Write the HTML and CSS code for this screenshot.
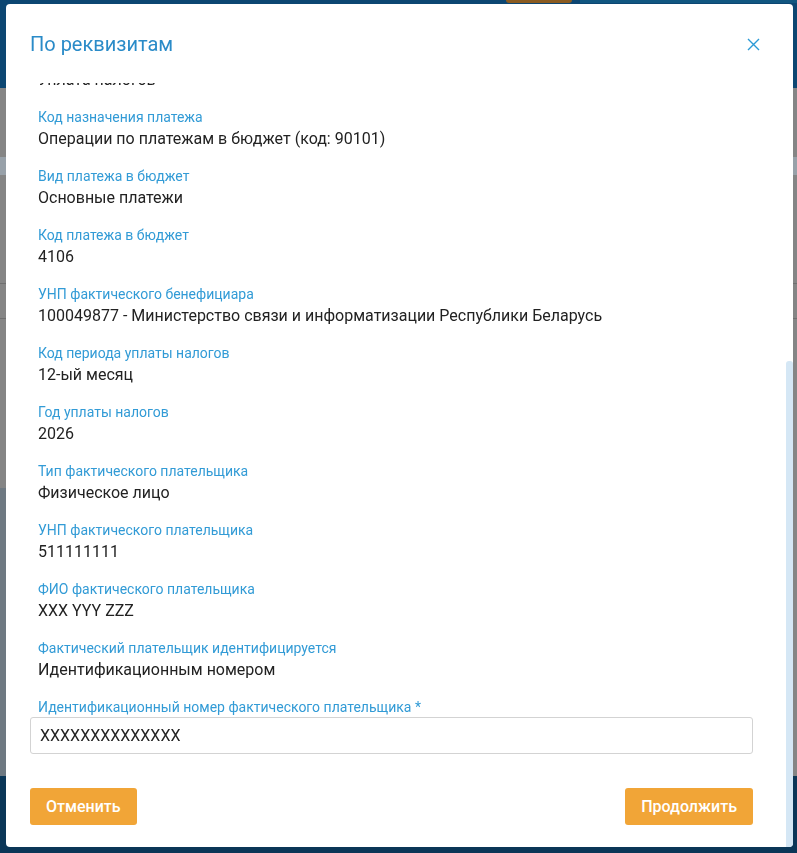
FILE: index.html
```html
<!DOCTYPE html>
<html lang="ru">

<head>
    <title>По реквизитам</title>
    <meta charset="utf-8">
    <link rel="stylesheet" href="styles.css">
</head>

<body>
    <div class="page">
        <header class="page-header">
            <div class="page-header-btn"></div>
            <div class="page-header-panel"></div>
        </header>
        <main class="page-main">
            <div class="page-row-head"></div>
            <div class="page-line page-line-first"></div>
            <div class="page-line page-line-second"></div>
            <div class="page-side"></div>
        </main>
        <footer class="page-footer"></footer>
    </div>

    <div class="modal">
        <div class="modal-header">
            <h2 class="modal-title">По реквизитам</h2>
            <button class="modal-close" aria-label="Закрыть">
                <svg width="13" height="13" viewBox="0 0 13 13">
                    <path d="M1 1 L12 12 M12 1 L1 12" stroke="currentColor" stroke-width="1.4" fill="none"/>
                </svg>
            </button>
        </div>

        <div class="modal-body">
            <dl class="details">
                <!-- first row is scrolled up under the header -->
                <div class="detail">
                    <dd class="detail-value">Уплата налогов</dd>
                </div>
                <div class="detail">
                    <dt class="detail-label">Код назначения платежа</dt>
                    <dd class="detail-value">Операции по платежам в бюджет (код: 90101)</dd>
                </div>
                <div class="detail">
                    <dt class="detail-label">Вид платежа в бюджет</dt>
                    <dd class="detail-value">Основные платежи</dd>
                </div>
                <div class="detail">
                    <dt class="detail-label">Код платежа в бюджет</dt>
                    <dd class="detail-value">4106</dd>
                </div>
                <div class="detail">
                    <dt class="detail-label">УНП фактического бенефициара</dt>
                    <dd class="detail-value">100049877 - Министерство связи и информатизации Республики Беларусь</dd>
                </div>
                <div class="detail">
                    <dt class="detail-label">Код периода уплаты налогов</dt>
                    <dd class="detail-value">12-ый месяц</dd>
                </div>
                <div class="detail">
                    <dt class="detail-label">Год уплаты налогов</dt>
                    <dd class="detail-value">2026</dd>
                </div>
                <div class="detail">
                    <dt class="detail-label">Тип фактического плательщика</dt>
                    <dd class="detail-value">Физическое лицо</dd>
                </div>
                <div class="detail">
                    <dt class="detail-label">УНП фактического плательщика</dt>
                    <dd class="detail-value">511111111</dd>
                </div>
                <div class="detail">
                    <dt class="detail-label">ФИО фактического плательщика</dt>
                    <dd class="detail-value">XXX YYY ZZZ</dd>
                </div>
                <div class="detail">
                    <dt class="detail-label">Фактический плательщик идентифицируется</dt>
                    <dd class="detail-value">Идентификационным номером</dd>
                </div>
            </dl>

            <label class="field-label" for="payerId">Идентификационный номер фактического плательщика *</label>
            <input class="field-input" id="payerId" type="text" value="XXXXXXXXXXXXXX">
        </div>

        <div class="modal-footer">
            <button class="btn">Отменить</button>
            <button class="btn">Продолжить</button>
        </div>

        <div class="scroll-thumb"></div>
    </div>
</body>

</html>
```

FILE: styles.css
```css
* {
    box-sizing: border-box;
}

body {
    margin: 0;
    padding: 0;
    overflow: hidden;
    font-family: Roboto, "Noto Sans", Arial, sans-serif;
}

/* dimmed page behind the dialog */
.page {
    height: 853px;
    display: flex;
    flex-direction: column;
    background-color: #858585;
}

.page-header {
    height: 88px;
    display: flex;
    gap: 8px;
    padding-left: 506px;
    background-color: #0c4672;
}

.page-header-btn {
    width: 66px;
    height: 3px;
    background-color: #8a5b20;
    border-radius: 0 0 3px 3px;
}

.page-header-panel {
    flex: 1;
    height: 3px;
    background-color: #115680;
}

.page-main {
    flex: 1;
    display: flex;
    flex-direction: column;
}

.page-row-head {
    margin-top: 69px;
    height: 18px;
    background-color: #98a1a9;
}

.page-line {
    height: 1px;
    background-color: #6f6f6f;
}
.page-line-first {margin-top: 108px;}
.page-line-second {margin-top: 34px;}

.page-side {
    margin-top: 169px;
    width: 40px;
    flex: 1;
    background-color: #6e7982;
}

.page-footer {
    height: 77px;
    background-color: #0b3657;
}

/* dialog */
.modal {
    position: fixed;
    top: 4px;
    left: 6px;
    width: 787px;
    height: 843px;
    display: flex;
    flex-direction: column;
    background-color: white;
    border-radius: 4px;
    overflow: hidden;
}

.modal-header {
    height: 79px;
    flex: none;
    display: flex;
    justify-content: space-between;
    align-items: flex-start;
    padding: 26px 33px 0 24px;
}

.modal-title {
    margin: 0;
    font-size: 20px;
    line-height: 28px;
    font-weight: 400;
    color: #2a8bc8;
}

.modal-close {
    display: flex;
    align-items: center;
    height: 28px;
    padding: 0;
    border: 0;
    background: none;
    color: #2b9ad6;
}

.modal-body {
    flex: 1;
    overflow: hidden;
    padding: 0 40px 0 24px;
}

.details {
    margin: -15px 0 0;
    padding: 0 0 0 8px;
}

.detail {
    margin-bottom: 16px;
}

.detail-label {
    font-size: 14px;
    line-height: 20px;
    color: #329bd6;
}

.detail-value {
    margin: 0;
    font-size: 16px;
    line-height: 23px;
    color: #222;
}

.field-label {
    display: block;
    margin-top: 2px;
    padding-left: 8px;
    font-size: 14px;
    line-height: 20px;
    color: #329bd6;
}

.field-input {
    display: block;
    width: 100%;
    height: 37px;
    padding: 0 9px;
    border: 1px solid #d3d3d3;
    border-radius: 3px;
    font-family: inherit;
    font-size: 16px;
    color: #222;
    outline: none;
}

.modal-footer {
    flex: none;
    display: flex;
    justify-content: space-between;
    padding: 23px 40px 22px 24px;
}

.btn {
    height: 37px;
    padding: 0 16px;
    border: 0;
    border-radius: 3px;
    background-color: #f1a537;
    color: white;
    font-family: inherit;
    font-size: 16px;
    font-weight: 500;
}

.scroll-thumb {
    position: absolute;
    top: 357px;
    right: 0;
    bottom: 0;
    width: 7px;
    background-color: #d5e7f5;
    border-radius: 3px 3px 0 0;
}
```
